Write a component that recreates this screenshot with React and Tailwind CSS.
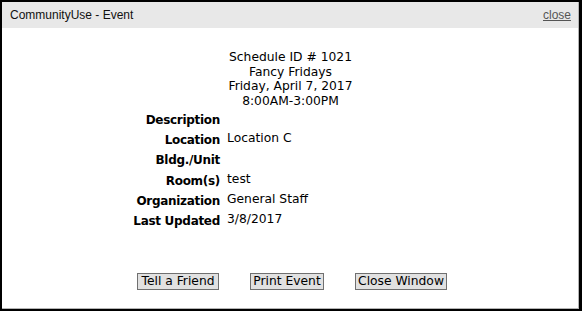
import React from 'react';

const rows = [
    ['Description', ''],
    ['Location', 'Location C'],
    ['Bldg./Unit', ''],
    ['Room(s)', 'test'],
    ['Organization', 'General Staff'],
    ['Last Updated', '3/8/2017'],
];

const verdana = { fontFamily: 'Verdana, "DejaVu Sans", sans-serif' };

const App = () => {
    return (
        <div className="w-[582px] h-[311px] bg-black pl-[2px] pt-[2px] pr-[3px] pb-[2px]">
            <div className="h-full flex flex-col bg-white border-r border-b border-[#b4b4b4]">
                <div className="h-[26px] bg-[#e8e8e8] flex items-center justify-between pl-[8px] pr-[7px] text-[12px] font-['Liberation_Sans',Arial,sans-serif]">
                    <span className="text-[#111]">CommunityUse - Event</span>
                    <a className="text-[#555] underline cursor-pointer">close</a>
                </div>

                <div className="flex-1 flex flex-col text-[12.3px] text-black" style={verdana}>
                    <div className="pt-[22px] flex flex-col items-center leading-[14.7px] pl-[1px]">
                        <div>Schedule ID # 1021</div>
                        <div>Fancy Fridays</div>
                        <div>Friday, April 7, 2017</div>
                        <div>8:00AM-3:00PM</div>
                    </div>

                    <div className="mt-[1px] flex flex-col">
                        {rows.map(([label, value]) => (
                            <div key={label} className="flex h-[20.3px] items-start">
                                <div className="w-[218px] text-right font-bold text-[12px] tracking-[-0.3px] pt-[2px] leading-[16px]">{label}</div>
                                <div className="pl-[7px] leading-[16px]">{value}</div>
                            </div>
                        ))}
                    </div>

                    <div className="mt-auto mb-[18px] flex pl-[135px] gap-[31px]">
                        <button className="w-[82px] h-[17px] bg-[#e1e1e1] border border-[#707070] leading-[15px] text-[12.3px]">Tell a Friend</button>
                        <button className="w-[74px] h-[17px] bg-[#e1e1e1] border border-[#707070] leading-[15px] text-[12.3px]">Print Event</button>
                        <button className="w-[92px] h-[17px] bg-[#e1e1e1] border border-[#707070] leading-[15px] text-[12.3px]">Close Window</button>
                    </div>
                </div>
            </div>
        </div>
    );
};

export default App;
